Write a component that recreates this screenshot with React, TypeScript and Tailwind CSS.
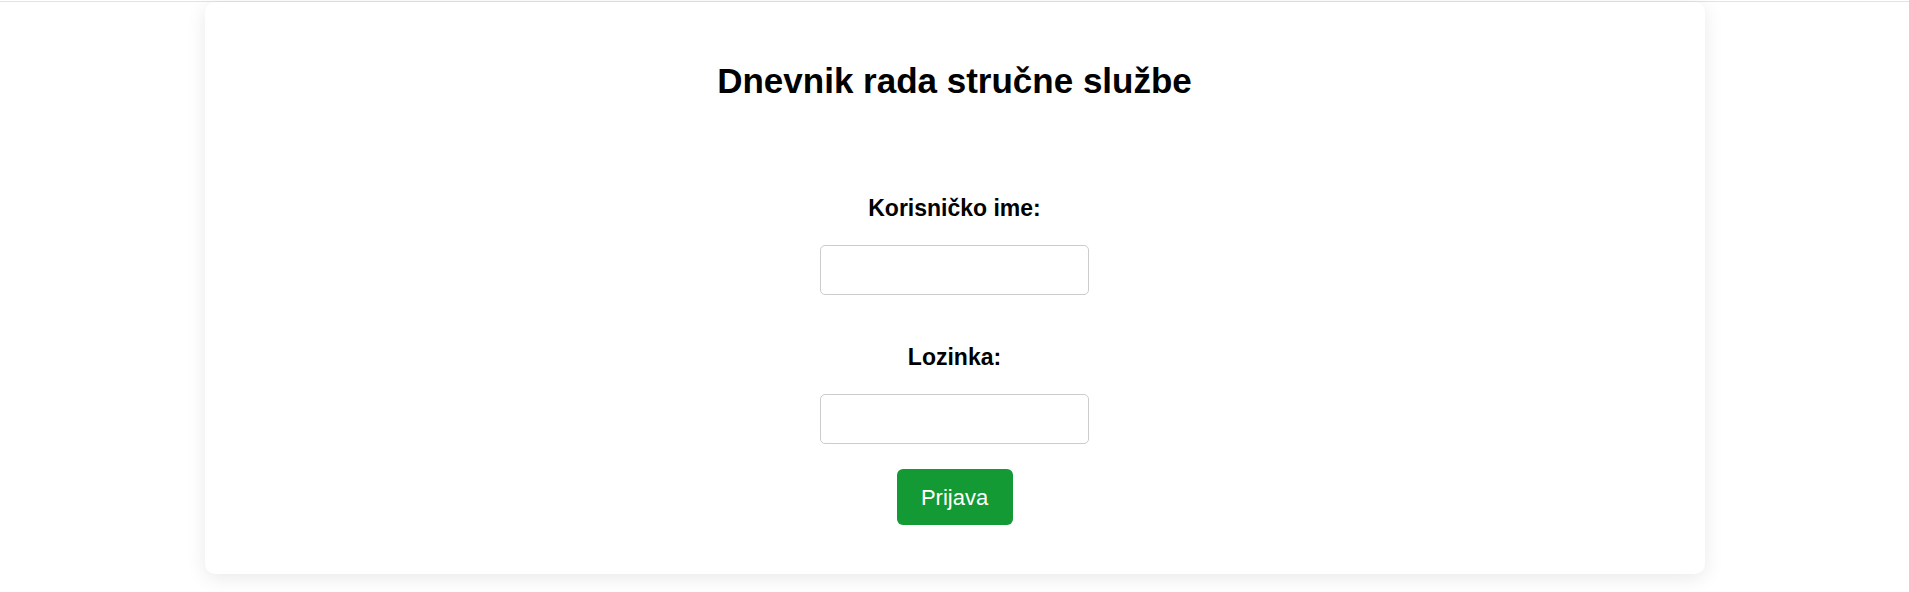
export default function App() {
  return (
    <div className="min-h-screen bg-white font-['Liberation_Sans',Arial,sans-serif] text-black">
      {/* Top rule */}
      <div className="mt-px h-px bg-[#e3e3e3]" />

      {/* Login card */}
      <div className="mx-auto flex w-[1500px] flex-col items-center rounded-[10px] bg-white pt-[59px] pb-[49px] shadow-[0_4px_20px_rgba(0,0,0,0.09)]">
        <h1 className="text-[35px] leading-[40px] font-bold">
          Dnevnik rada stručne službe
        </h1>

        <form className="mt-[94px] flex flex-col items-center">
          <label htmlFor="username" className="text-[23px] leading-[26px] font-bold">
            Korisničko ime:
          </label>
          <input
            id="username"
            type="text"
            className="mt-6 h-[50px] w-[269px] rounded-[5px] border border-[#cccccc] bg-white px-3 text-[18px] outline-none"
          />

          <label htmlFor="password" className="mt-[49px] text-[23px] leading-[26px] font-bold">
            Lozinka:
          </label>
          <input
            id="password"
            type="password"
            className="mt-6 h-[50px] w-[269px] rounded-[5px] border border-[#cccccc] bg-white px-3 text-[18px] outline-none"
          />

          <button
            type="button"
            className="mt-[25px] h-[56px] w-[116px] rounded-[6px] bg-[#139a34] text-[22px] text-white"
          >
            Prijava
          </button>
        </form>
      </div>
    </div>
  );
}
